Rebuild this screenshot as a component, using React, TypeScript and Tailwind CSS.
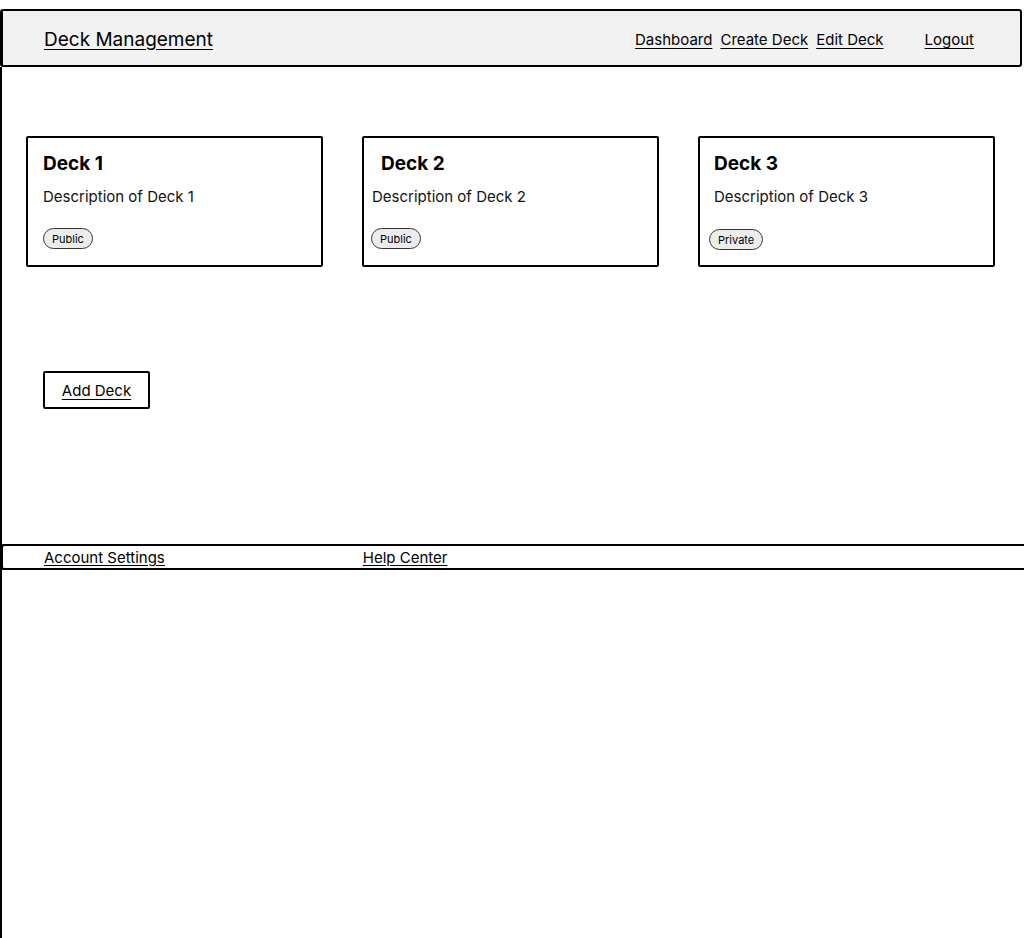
const decks = [
  { title: "Deck 1", desc: "Description of Deck 1", tag: "Public", titleX: "pl-[15px]", descX: "pl-[15px]", tagX: "ml-[15px] mt-[21px]" },
  { title: "Deck 2", desc: "Description of Deck 2", tag: "Public", titleX: "pl-[17px]", descX: "pl-[8px]", tagX: "ml-[7px] mt-[21px]" },
  { title: "Deck 3", desc: "Description of Deck 3", tag: "Private", titleX: "pl-[14px]", descX: "pl-[14px]", tagX: "ml-[9px] mt-[22px]" },
];

function DeckCard({ deck }: { deck: (typeof decks)[number] }) {
  return (
    <div className="flex h-[131px] w-[297px] flex-col rounded-[2px] border-2 border-black bg-white pt-[13px]">
      <h2 className={`${deck.titleX} text-[19px] font-bold leading-[26px]`}>{deck.title}</h2>
      <p className={`${deck.descX} mt-[10px] text-[15px] leading-[20px] text-[#111]`}>{deck.desc}</p>
      <span
        className={`${deck.tagX} flex h-[21px] w-fit items-center rounded-full border border-[#333] bg-[#ececec] px-[8px] pt-[2px] text-[11px] leading-none`}
      >
        {deck.tag}
      </span>
    </div>
  );
}

export default function App() {
  return (
    <div className="flex min-h-[938px] flex-col overflow-hidden bg-white font-['Inter',sans-serif] text-black">
      <header className="mt-[9px] flex h-[58px] w-[1022px] items-center rounded-[3px] border-2 border-l-[3px] border-black bg-[#f2f2f2] pl-[41px] pr-[46px] pt-[4px]">
        <a href="#" className="text-[19px] underline underline-offset-[3px]">
          Deck Management
        </a>
        <nav className="ml-auto flex items-center text-[15px]">
          <a href="#" className="underline underline-offset-[3px]">Dashboard</a>
          <a href="#" className="ml-[8px] underline underline-offset-[3px]">Create Deck</a>
          <a href="#" className="ml-[8px] underline underline-offset-[3px]">Edit Deck</a>
          <a href="#" className="ml-[41px] underline underline-offset-[3px]">Logout</a>
        </nav>
      </header>

      <div className="flex-1 border-l-2 border-black">
        <main className="pt-[69px]">
          <div className="flex gap-[39px] pl-[24px]">
            {decks.map((d) => (
              <DeckCard key={d.title} deck={d} />
            ))}
          </div>

          <button className="ml-[41px] mt-[104px] flex h-[38px] w-[107px] items-center justify-center rounded-[2px] border-2 border-black bg-white pt-[2px] text-[15px] underline underline-offset-[3px]">
            Add Deck
          </button>
        </main>

        <footer className="-ml-[2px] mt-[135px] flex h-[26px] w-[1030px] items-center rounded-[4px] border-2 border-l-[3px] border-black bg-white pt-[2px] text-[15px] leading-[18px]">
          <a href="#" className="ml-[41px] underline underline-offset-[2px]">Account Settings</a>
          <a href="#" className="ml-[198px] underline underline-offset-[2px]">Help Center</a>
        </footer>
      </div>
    </div>
  );
}
